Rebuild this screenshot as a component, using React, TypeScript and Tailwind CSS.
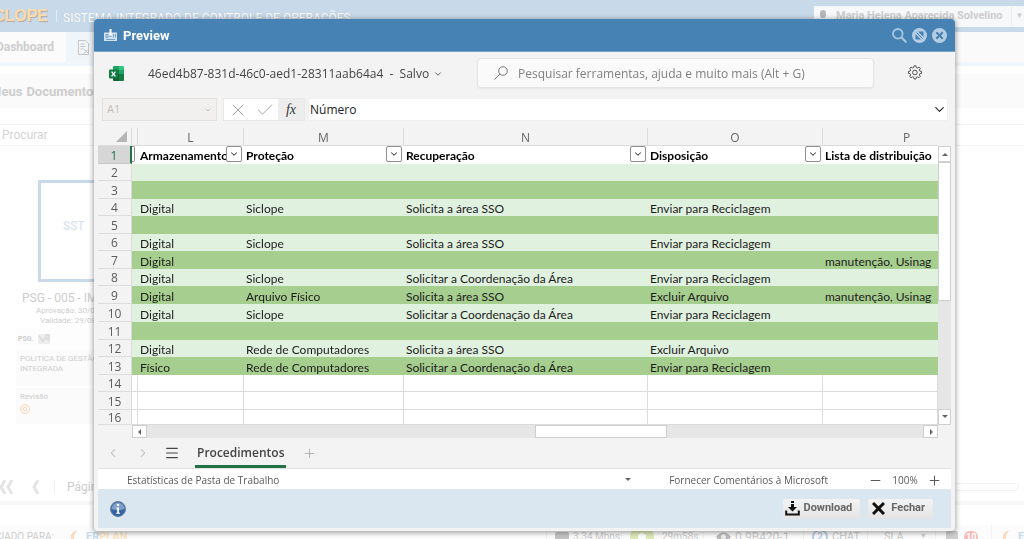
import { useState } from "react";
import type { ReactNode } from "react";
import { Check, ChevronDown, ChevronLeft, ChevronRight, Menu, Minus, Plus, X } from "lucide-react";

const LETTERS = ["L", "M", "N", "O", "P"];
const HEADERS = ["Armazenamento", "Proteção", "Recuperação", "Disposição", "Lista de distribuição"];

const ROWS: string[][] = [
    [],
    [],
    ["Digital", "Siclope", "Solicita a área SSO", "Enviar para Reciclagem", ""],
    [],
    ["Digital", "Siclope", "Solicita a área SSO", "Enviar para Reciclagem", ""],
    ["Digital", "", "", "", "manutenção, Usinag"],
    ["Digital", "Siclope", "Solicitar a Coordenação da Área", "Enviar para Reciclagem", ""],
    ["Digital", "Arquivo Físico", "Solicita a área SSO", "Excluir Arquivo", "manutenção, Usinag"],
    ["Digital", "Siclope", "Solicitar a Coordenação da Área", "Enviar para Reciclagem", ""],
    [],
    ["Digital", "Rede de Computadores", "Solicita a área SSO", "Excluir Arquivo", ""],
    ["Físico", "Rede de Computadores", "Solicitar a Coordenação da Área", "Enviar para Reciclagem", ""],
    [],
    [],
    [],
];

const UI = "font-['Open_Sans','Noto_Sans',sans-serif]";

function ExcelIcon() {
    return (
        <svg width="15" height="15" viewBox="0 0 15 15" aria-hidden="true">
            <path d="M4 1a1 1 0 0 1 1-1h5v4H4z" fill="#21a366" />
            <path d="M10 0h4a1 1 0 0 1 1 1v3h-5z" fill="#33c481" />
            <path d="M4 4h6v4H4z" fill="#107c41" />
            <path d="M10 4h5v4h-5z" fill="#21a366" />
            <path d="M4 8h6v7H5a1 1 0 0 1-1-1z" fill="#185c37" />
            <path d="M10 8h5v6a1 1 0 0 1-1 1h-4z" fill="#107c41" />
            <rect x="0" y="3.5" width="9" height="9" rx="1" fill="#107c41" />
            <path d="M2.6 5.6l3.8 4.8M6.4 5.6l-3.8 4.8" stroke="#fff" strokeWidth="1.3" />
        </svg>
    );
}

function PreviewIcon() {
    return (
        <svg width="13" height="12" viewBox="0 0 13 12" aria-hidden="true">
            <path d="M0 3.500h13V12H0z" fill="#d3e2ef" />
            <path d="M5.500 0h2v6h-2z" fill="#fff" />
            <path d="M2 5.500h2v3H2zM9.500 5v3.500M11.500 5v3.500M2 10.500h9M5.500 7.500h2" stroke="#6c9bc3" strokeWidth="0.900" fill="none" />
        </svg>
    );
}

function GearIcon() {
    return (
        <svg width="16" height="16" viewBox="0 0 16 16" fill="none" stroke="#505050" strokeWidth="1" strokeLinejoin="round">
            <path d="M6.700 2.500L7.100.8h1.800l.4 1.700 1.200.5 1.500-.9 1.300 1.300-.9 1.500.5 1.200 1.700.4v1.800l-1.700.4-.5 1.200.9 1.500-1.300 1.300-1.500-.9-1.200.5-.4 1.700H7.100l-.4-1.700-1.200-.5-1.500.9-1.300-1.300.9-1.500-.5-1.200-1.700-.4V6.500l1.700-.4.5-1.200-.9-1.500L4 2.100l1.500.9z" />
            <circle cx="7.900" cy="7.500" r="2.300" />
        </svg>
    );
}

function InfoIcon() {
    return (
        <svg width="16" height="16" viewBox="0 0 16 16" aria-hidden="true">
            <circle cx="8" cy="8" r="7.5" fill="#3465a4" stroke="#6b7f99" />
            <path d="M1.500 8a6.500 6.500 0 0 1 13 0c-4 1.500-9 1.500-13 0z" fill="#7d9fcb" />
            <circle cx="8" cy="4" r="1.300" fill="#fff" />
            <path d="M6.300 6.500h2.700v5.200h1v1H6.200v-1h1V7.500h-.9z" fill="#fff" />
        </svg>
    );
}

function DownloadIcon() {
    return (
        <svg width="15" height="15" viewBox="0 0 15 15" aria-hidden="true">
            <path d="M6 0h3v2H6zM6 3h3v3h3L7.500 10.500 3 6h3z" fill="#111" />
            <path d="M1.200 9.500v4h12.600v-4" stroke="#111" strokeWidth="2" fill="none" />
        </svg>
    );
}

function Flame() {
    return (
        <svg width="8" height="14" viewBox="0 0 8 14" className="shrink-0" aria-hidden="true">
            <path d="M7 0C2 2 0 5 1 8c1 2 3 3 4 6 2-4-2-5-1-8C4.500 4 6 2 7 0z" fill="#fbd9bd" />
        </svg>
    );
}

function Erplan() {
    return (
        <span className="flex items-center gap-2 text-[11px] font-bold">
            <Flame />
            <span>
                <span className="text-[#c6daeb]">ER</span>
                <span className="text-[#fce7c3]">PLAN</span>
            </span>
        </span>
    );
}

function Arrow({ dir }: { dir: "up" | "down" | "left" | "right" }) {
    const paths = { up: "M0 5l3-3 3 3z", down: "M0 1l3 3 3-3z", left: "M4 0v6L1 3z", right: "M2 0v6l3-3z" };
    return (
        <svg width="6" height="6" viewBox="0 0 6 6" aria-hidden="true">
            <path d={paths[dir]} fill="#666" />
        </svg>
    );
}

function FilterButton({ label }: { label: string }) {
    return (
        <button aria-label={label} className="flex size-4 shrink-0 items-center justify-center rounded-xs border border-[#8f8f8f] bg-white">
            <ChevronDown size={10} strokeWidth={2.5} color="#444" />
        </button>
    );
}

function FooterCell({ className, children }: { className: string; children: ReactNode }) {
    return (
        <div className={`flex h-full shrink-0 items-center overflow-hidden border-r border-[#f3f3f3] whitespace-nowrap ${className}`}>
            {children}
        </div>
    );
}

function Background() {
    return (
        <div className="flex h-screen flex-col overflow-hidden bg-white text-[#cdcdcd]">
            <header className="flex h-8 shrink-0 items-center bg-[#c8d9e9]">
                <div className="flex w-12 shrink-0 justify-end overflow-hidden font-['Liberation_Sans',sans-serif] text-base font-bold text-[#fcdcae] [text-shadow:1px_1px_1px_#b0a9a0]">
                    SICLOPE
                </div>
                <div className="ml-2 h-3 border-l border-[#e4edf5]" />
                <span className="mt-1 ml-1.5 text-xs text-white [text-shadow:0_0_1px_#a9bccd]">SISTEMA INTEGRADO DE CONTROLE DE OPERAÇÕES</span>
                <div className="ml-auto flex h-[21px] w-[210px] items-center bg-[#f7f8f9] text-[11px] font-bold">
                    <span className="mb-1 ml-1.5 h-2 w-1.5 shrink-0 rounded-full bg-[#b8b8b8]" />
                    <span className="ml-2.5 whitespace-nowrap">Maria Helena Aparecida Solvelino</span>
                    <span className="ml-2 flex h-full items-center border-l border-[#eee] pl-1 text-[8px]">▼</span>
                </div>
            </header>

            <nav className="flex h-[34px] shrink-0 items-stretch border-b-4 border-[#f1f6fa] bg-[#fafafa] text-xs font-bold">
                <a href="#dashboard" className="flex w-[66px] items-center justify-end overflow-hidden bg-[#fbfbfb] pr-3">
                    Dashboard
                </a>
                <a href="#documentos" aria-label="Documentos" className="flex w-10 items-center bg-[#f0f5fa] pl-3">
                    <svg width="11" height="15" viewBox="0 0 11 15" fill="none" stroke="#c4c4c4">
                        <path d="M.5.5h7l3 3v11H.5zM2.500 4h4M2.500 6.500h5M2.500 9h3M6 9l4 4M10 9.500l-4 4" />
                    </svg>
                </a>
            </nav>

            <h1 className="mt-2 -ml-2.5 flex h-[34px] shrink-0 items-center bg-[#fafafa] pt-0.5 text-[13px] font-bold">
                <span className="mr-1">Meus</span> Documentos
            </h1>
            <label className="mt-4 flex h-[22px] shrink-0 items-center border-y border-[#f3f3f3] px-0.5">
                <input aria-label="Procurar" placeholder="Procurar" className="w-full bg-transparent text-xs outline-none placeholder:text-[#d4d4d4]" />
            </label>

            <section className="mt-[34px] ml-4 w-[130px] shrink-0">
                <div className="ml-[22px] flex h-[102px] items-center border-[3px] border-[#c8d9e9] pb-2.5 pl-[22px] text-xs text-[#d3e0ee]">SST</div>
                <h2 className="mt-2 ml-1.5 text-xs whitespace-nowrap">PSG - 005 - IMPLANTAÇÃO</h2>
                <p className="ml-5 text-[8px] leading-[10px]">
                    Aprovação: 30/08/2021
                    <br />
                    <span className="ml-1">Validade: 29/08/2023</span>
                </p>
                <div className="mt-0.5 flex h-[22px] items-center gap-1 bg-[#fdfdfd] pl-0.5 text-[7px] font-bold">
                    PSG.
                    <svg width="12" height="12" viewBox="0 0 12 12">
                        <path d="M0 1h12v10H0z" fill="#eee" />
                        <path d="M1 3l4 5 3-4 3 4M7 2h4v4" stroke="#ddd" strokeWidth="2" fill="none" />
                    </svg>
                </div>
                <p className="h-9 bg-[#fbfbfb] pt-1 pl-1 text-[8px] leading-[10px]">
                    POLITICA DE GESTÃO
                    <br />
                    INTEGRADA
                </p>
                <div className="mt-0.5 h-9 bg-[#fbfbfb] pt-1 pl-1 text-[8px] leading-[10px]">
                    Revisão
                    <svg width="10" height="10" viewBox="0 0 10 10" fill="none" stroke="#fbd5b5" className="mt-0.5">
                        <circle cx="5" cy="5" r="4.300" />
                        <circle cx="5" cy="5" r="1.800" />
                    </svg>
                </div>
            </section>

            <div className="mt-auto flex h-7 shrink-0 items-center text-xs">
                <svg width="40" height="14" viewBox="0 0 40 14" fill="none" stroke="#e4e4e4" strokeWidth="3">
                    <path d="M5 0L1 7l4 7M12 0L8 7l4 7M38 0l-4 7 4 7" />
                </svg>
                <span className="ml-3.5 h-3 border-l border-[#eee]" />
                <span className="ml-3">Página</span>
                <span className="mr-[5px] ml-auto h-2 w-[150px] rounded border border-[#f3f3f3]" />
            </div>
            <div className="mb-5 h-1 shrink-0 bg-[#f8f8f8]" />
            <footer className="-mb-2.5 flex h-6 shrink-0 items-center bg-[#fcfcfc] text-xs">
                <div className="flex w-[70px] shrink-0 justify-end overflow-hidden pr-4 text-[10px] whitespace-nowrap">LICENCIADO PARA:</div>
                <Erplan />
                <div className="min-w-0 flex-1" />
                <FooterCell className="w-[76px] gap-1 border-l pl-2 text-[10px]">
                    <span className="h-2.5 w-3.5 shrink-0 rounded-xs bg-[#c4c4c4]" />
                    <span>3.34 Mbps</span>
                </FooterCell>
                <FooterCell className="w-[82px] gap-2 pl-2 text-[10px]">
                    <span className="flex size-6 shrink-0 items-center justify-center rounded-full bg-[#dfeab8]">
                        <span className="size-2 rounded-full bg-white" />
                    </span>
                    29m58s
                </FooterCell>
                <FooterCell className="w-[100px] gap-1 pl-3">
                    <svg width="15" height="10" viewBox="0 0 15 10" className="shrink-0">
                        <path d="M0 5c4-6 11-6 15 0-4 6-11 6-15 0z" fill="#bbb" />
                        <circle cx="7.500" cy="4.500" r="2.500" fill="#eee" />
                    </svg>
                    0.9B420-1
                </FooterCell>
                <FooterCell className="w-16 gap-1 pl-2 text-[11px]">
                    <span className="flex size-4 shrink-0 items-center justify-center rounded-full border-2 border-[#bccce4] text-[10px] font-bold text-[#bccce4]">2</span>
                    CHAT
                </FooterCell>
                <FooterCell className="w-[68px] gap-4 pl-4 text-[11px]">
                    SLA <span className="text-[7px]">▼</span>
                </FooterCell>
                <FooterCell className="w-14 gap-1.5 pl-2.5">
                    <span className="size-3 shrink-0 rounded-xs bg-[#d0d0d0]" />
                    <span className="rounded-full bg-[#f6baba] px-0.5 text-[9px] font-bold text-white">10</span>
                </FooterCell>
                <div className="w-8 shrink-0 overflow-hidden pl-2.5">
                    <Erplan />
                </div>
            </footer>
        </div>
    );
}

function Sheet() {
    return (
        <div className="flex">
            <div className="min-w-0 flex-1 overflow-hidden">
                <table className="w-full table-fixed border-separate border-spacing-0 font-['Lato',sans-serif] text-xs leading-4 text-[#1c1c1c]">
                    <colgroup>
                        <col className="w-[34px]" />
                        <col className="w-[6px]" />
                        <col className="w-[106px]" />
                        <col className="w-[160px]" />
                        <col className="w-[244px]" />
                        <col className="w-[175px]" />
                        <col />
                    </colgroup>
                    <thead>
                        <tr className={`h-[18px] text-[#666] ${UI}`}>
                            <th className="border-r border-b border-[#dcdcdc] p-0">
                                <svg width="11" height="11" viewBox="0 0 11 11" className="mr-1 ml-auto" aria-hidden="true">
                                    <path d="M11 0v11H0z" fill="#b5b5b5" />
                                </svg>
                            </th>
                            <th className="border-r border-b border-[#dcdcdc] p-0" />
                            {LETTERS.map((letter) => (
                                <th
                                    key={letter}
                                    scope="col"
                                    className="border-r border-b border-[#dcdcdc] p-0 pt-0.5 leading-[15px] font-normal last:border-r-0 last:pl-20 last:text-left"
                                >
                                    {letter}
                                </th>
                            ))}
                        </tr>
                    </thead>
                    <tbody>
                        <tr className="h-[18px] bg-white">
                            <th scope="row" className={`border-r-2 border-b border-[#217346] border-b-[#c8c8c8] bg-[#d6d6d6] p-0 pt-0.5 font-normal text-[#217346] ${UI}`}>
                                <div className="-my-1">1</div>
                            </th>
                            <td className="p-0 align-top">
                                <div className="h-4 w-[3px] rounded-r-xs border-y border-r border-[#8f8f8f]" />
                            </td>
                            {HEADERS.map((header, i) => (
                                <td key={header} className="overflow-hidden p-0 pl-0.5 align-top font-bold whitespace-nowrap text-black">
                                    <div className="flex justify-between pr-0.5">
                                        <span className="min-w-0 overflow-hidden pt-0.5">{header}</span>
                                        {i < 4 && <FilterButton label={`Filtrar ${header}`} />}
                                    </div>
                                </td>
                            ))}
                        </tr>
                        {ROWS.map((row, i) => {
                            const num = i + 2;
                            const blank = num > 13;
                            const fill = blank ? "bg-white" : num % 2 ? "bg-[#a6ce8f]" : "bg-[#e1f1e0]";
                            const height = num % 2 || num === 10 ? "h-[18px]" : "h-[17px]";
                            const line = blank ? "border-r border-b border-[#dcdcdc]" : "";
                            return (
                                <tr key={num} className={`${num === 16 ? "h-[15px]" : height} ${fill}`}>
                                    <th scope="row" className={`border-r border-b border-[#dcdcdc] bg-[#f3f3f3] p-0 pt-0.5 font-normal text-[#5c5c5c] ${UI}`}>
                                        <div className="-my-1">{num}</div>
                                    </th>
                                    <td className={`p-0 ${line}`} />
                                    {LETTERS.map((letter, c) => (
                                        <td key={letter} className={`overflow-hidden p-0 pt-0.5 pl-0.5 leading-[15px] whitespace-nowrap ${line}`}>
                                            {row[c]}
                                        </td>
                                    ))}
                                </tr>
                            );
                        })}
                    </tbody>
                </table>
                <div className="ml-[34px] flex h-[13px] items-stretch bg-[#e6e6e6]">
                    <button aria-label="Rolar para a esquerda" className="flex w-[15px] items-center justify-center border border-[#cfcfcf] bg-white">
                        <Arrow dir="left" />
                    </button>
                    <div className="flex-1">
                        <div className="ml-[50%] h-full w-[17%] border border-[#cfcfcf] bg-white" />
                    </div>
                    <button aria-label="Rolar para a direita" className="flex w-[15px] items-center justify-center border border-[#cfcfcf] bg-white">
                        <Arrow dir="right" />
                    </button>
                </div>
            </div>
            <div className="mt-[18px] mb-[13px] flex w-[13px] flex-col bg-[#e6e6e6]">
                <button aria-label="Rolar para cima" className="flex h-4 items-center justify-center border border-[#cfcfcf] bg-white">
                    <Arrow dir="up" />
                </button>
                <div className="h-[139px] border border-[#cfcfcf] bg-white" />
                <button aria-label="Rolar para baixo" className="mt-auto flex h-4 items-center justify-center border border-[#cfcfcf] bg-white">
                    <Arrow dir="down" />
                </button>
            </div>
        </div>
    );
}

function PreviewDialog() {
    const [formula, setFormula] = useState("Número");
    const [zoom, setZoom] = useState(100);

    return (
        <div role="dialog" aria-label="Preview" className="w-full self-start overflow-hidden rounded-sm bg-[#f3f3f3] pb-[3px] shadow-[0_1px_5px_1px_rgba(0,0,0,0.35)]">
            <div className="flex h-[33px] items-center border-b border-[#79a5c9] bg-[#4682b4] pr-2 pl-2.5 text-white">
                <PreviewIcon />
                <h2 className="mt-0.5 ml-1.5 flex-1 text-[13px] font-bold">Preview</h2>
                <div className="flex items-center gap-[5px] text-[#a9c6de]">
                    <button aria-label="Pesquisar">
                        <svg width="15" height="15" viewBox="0 0 15 15" fill="none" stroke="currentColor" strokeWidth="1.800">
                            <circle cx="5.800" cy="5.800" r="4.800" />
                            <path d="M9.300 9.300l5 5" strokeWidth="2.200" />
                        </svg>
                    </button>
                    <button aria-label="Restaurar">
                        <svg width="15" height="15" viewBox="0 0 15 15">
                            <circle cx="7.500" cy="7.500" r="7.500" fill="#b4cde2" />
                            <path d="M6 3.500h5.500V9zM3.500 6v5.500H9z" fill="#4682b4" />
                            <path d="M4.500 4.500l6 6" stroke="#4682b4" strokeWidth="1" />
                            <path d="M7 5.500l3 3M5.500 7l3 3" stroke="#b4cde2" strokeWidth="1" />
                        </svg>
                    </button>
                    <button aria-label="Fechar janela">
                        <svg width="15" height="15" viewBox="0 0 15 15">
                            <circle cx="7.500" cy="7.500" r="7.500" fill="#b4cde2" />
                            <path d="M4.300 4.300l6.400 6.400M10.700 4.300l-6.400 6.400" stroke="#4682b4" strokeWidth="2" />
                        </svg>
                    </button>
                </div>
            </div>

            <div className={`mx-1 ${UI}`}>
                <div className="flex h-[46px] items-center pb-1 text-xs text-[#444]">
                    <span className="ml-[11px]">
                        <ExcelIcon />
                    </span>
                    <button className="ml-6 flex w-[329px] shrink-0 items-center gap-1 pt-px whitespace-nowrap">
                        <span>46ed4b87-831d-46c0-aed1-28311aab64a4&nbsp; -&nbsp; Salvo</span>
                        <ChevronDown size={10} />
                    </button>
                    <label className="flex h-[30px] w-[397px] items-center gap-2.5 rounded border border-[#e4e4e4] bg-[#fafafa] pl-4 shadow-xs">
                        <svg width="14" height="14" viewBox="0 0 14 14" fill="none" stroke="#777" className="shrink-0" aria-hidden="true">
                            <circle cx="9" cy="5" r="4.300" />
                            <path d="M6 8L.5 13.500" />
                        </svg>
                        <input
                            aria-label="Pesquisar ferramentas"
                            placeholder="Pesquisar ferramentas, ajuda e muito mais (Alt + G)"
                            className="min-w-0 flex-1 bg-transparent pt-px outline-none placeholder:text-[#808080]"
                        />
                    </label>
                    <button aria-label="Configurações" className="mr-7 ml-auto">
                        <GearIcon />
                    </button>
                </div>

                <div className="ml-1 flex h-[23px] items-stretch text-xs">
                    <button className="flex w-[115px] items-center justify-between border border-[#e3e1df] bg-[#f1f0ef] px-1 text-[11px] text-[#bdbdbd]">
                        A1 <ChevronDown size={8} strokeWidth={3} />
                    </button>
                    <div className="ml-1.5 flex items-stretch border border-[#e8e8e8] bg-white text-[#a8a8a8]">
                        <button aria-label="Cancelar" className="flex w-[27px] items-center justify-center">
                            <X size={20} strokeWidth={1.2} />
                        </button>
                        <button aria-label="Inserir" className="flex w-[27px] items-center justify-center">
                            <Check size={20} strokeWidth={1.2} />
                        </button>
                        <button className="w-[26px] bg-[#ededed] font-['Liberation_Serif',serif] text-sm text-[#333] italic">fx</button>
                    </div>
                    <div className="ml-[3px] flex min-w-0 flex-1 items-center border border-[#efefef] bg-white pl-px">
                        <input
                            aria-label="Barra de fórmulas"
                            value={formula}
                            onChange={(e) => setFormula(e.target.value)}
                            className="min-w-0 flex-1 text-[#222] outline-none"
                        />
                        <button aria-label="Expandir barra de fórmulas">
                            <ChevronDown size={15} color="#333" />
                        </button>
                    </div>
                    <div className="w-[3px]" />
                </div>

                <div className="mt-[7px]">
                    <Sheet />
                </div>

                <div className="flex h-[31px] items-center border-b border-[#e1e1e1]">
                    <button aria-label="Planilha anterior" className="ml-2 text-[#b8b8b8]">
                        <ChevronLeft size={14} strokeWidth={1.8} />
                    </button>
                    <button aria-label="Próxima planilha" className="ml-4 text-[#b8b8b8]">
                        <ChevronRight size={14} strokeWidth={1.8} />
                    </button>
                    <button aria-label="Todas as planilhas" className="ml-3.5 text-[#444]">
                        <Menu size={16} strokeWidth={1.8} />
                    </button>
                    <button className="ml-[15px] h-[30px] self-start border-b-3 border-[#217346] px-0.5 pt-0.5 text-xs font-semibold text-[#444]">
                        Procedimentos
                    </button>
                    <button aria-label="Nova planilha" className="ml-4 text-[#b0b0b0]">
                        <Plus size={15} strokeWidth={1.5} />
                    </button>
                </div>

                <div className="flex h-5 items-center bg-white pt-0.5 text-[10px] text-[#595959]">
                    <button className="ml-[29px]">Estatísticas de Pasta de Trabalho</button>
                    <button aria-label="Opções de status" className="mr-[38px] ml-auto">
                        <Arrow dir="down" />
                    </button>
                    <button>Fornecer Comentários à Microsoft</button>
                    <button aria-label="Diminuir zoom" className="ml-10" onClick={() => setZoom(zoom - 10)}>
                        <Minus size={15} strokeWidth={1.7} />
                    </button>
                    <span className="w-11 text-center">{zoom}%</span>
                    <button aria-label="Aumentar zoom" className="mr-[9px]" onClick={() => setZoom(zoom + 10)}>
                        <Plus size={15} strokeWidth={1.7} />
                    </button>
                </div>
            </div>

            <div className="mx-1 flex h-[39px] items-center gap-2 bg-[#dae6f0] pr-[18px] pl-3 text-[11px] font-bold text-[#666]">
                <InfoIcon />
                <button className="ml-auto flex h-5 items-center gap-1 rounded-xs bg-linear-to-b from-[#f3f3f3] to-[#e4e4e4] px-0.5">
                    <DownloadIcon />
                    <span className="pr-1.5">Download</span>
                </button>
                <button className="flex h-5 items-center gap-1.5 rounded-xs bg-linear-to-b from-[#f3f3f3] to-[#e4e4e4] px-1">
                    <svg width="13" height="13" viewBox="0 0 13 13" aria-hidden="true">
                        <path d="M1 1l11 11M12 1L1 12" stroke="#111" strokeWidth="3" />
                    </svg>
                    <span className="pr-1">Fechar</span>
                </button>
            </div>
        </div>
    );
}

export default function App() {
    return (
        <div className="font-['Roboto',sans-serif]">
            <Background />
            <div className="fixed inset-0 flex pt-[19px] pr-[69px] pl-[94px]">
                <PreviewDialog />
            </div>
        </div>
    );
}
